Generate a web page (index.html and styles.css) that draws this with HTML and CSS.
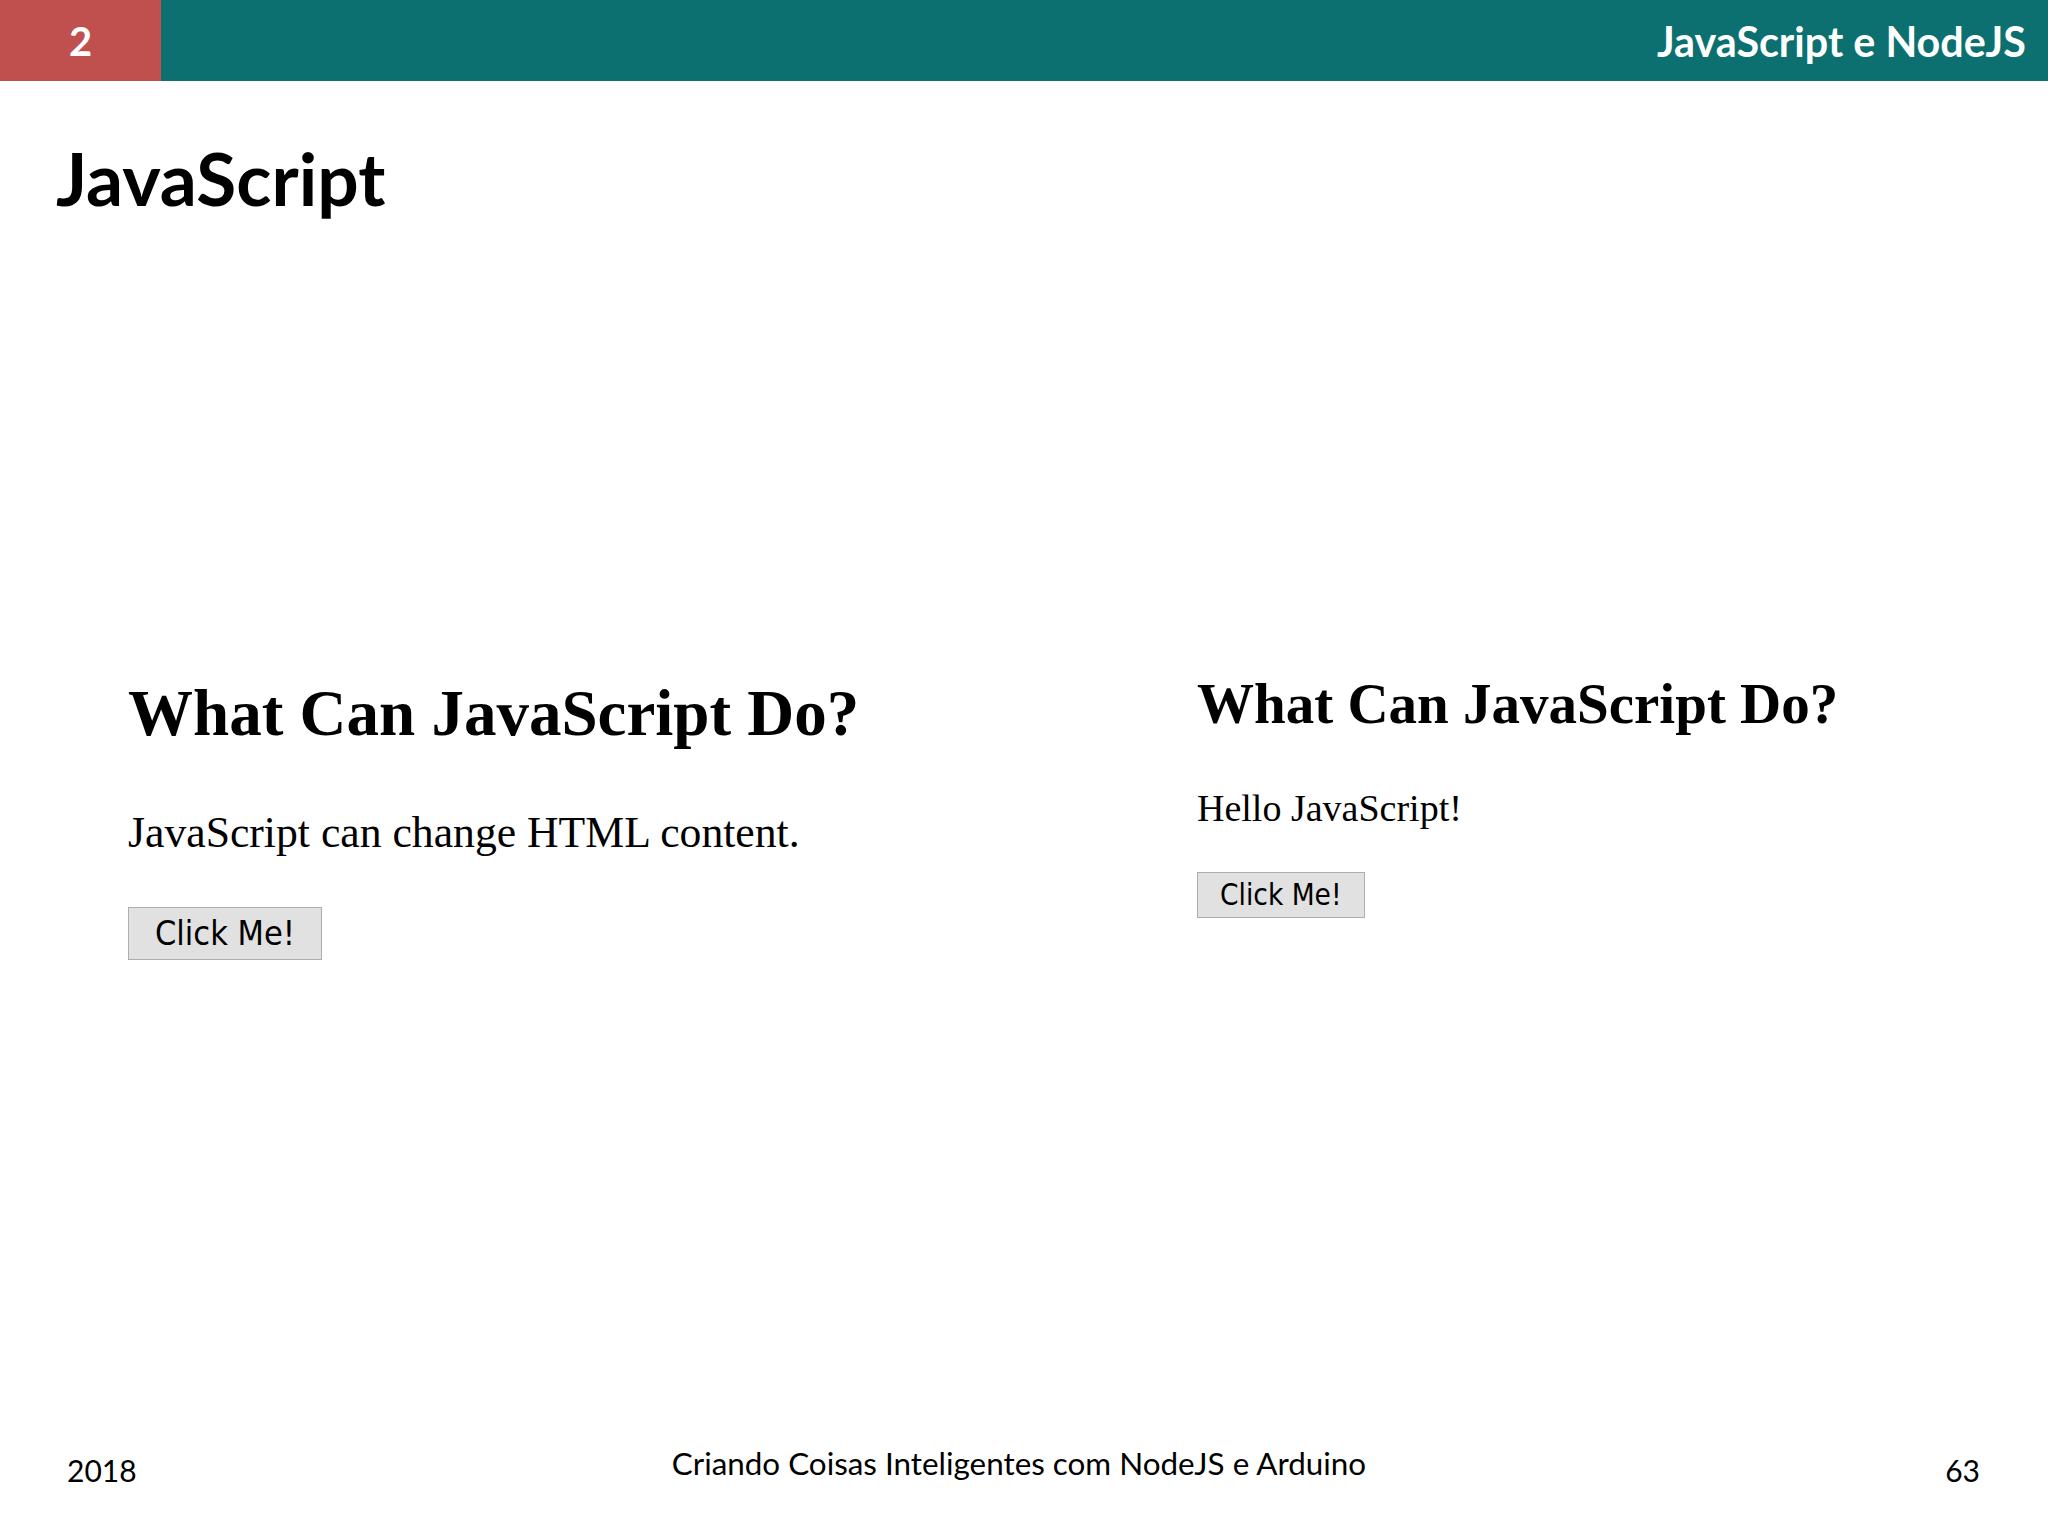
FILE: index.html
```html
<!DOCTYPE html>
<html lang="pt">
<head>
  <meta charset="UTF-8" />
  <title>JavaScript e NodeJS - 63</title>
  <link rel="stylesheet" href="styles.css">
</head>
<body>
  <div class="slide">
    <header class="topbar">
      <div class="chapter">2</div>
      <div class="bar">JavaScript e NodeJS</div>
    </header>

    <h1 class="title">JavaScript</h1>

    <section class="shots">
      <div class="shot large">
        <h2>What Can JavaScript Do?</h2>
        <p>JavaScript can change HTML content.</p>
        <button>Click Me!</button>
      </div>
      <div class="shot small">
        <h2>What Can JavaScript Do?</h2>
        <p>Hello JavaScript!</p>
        <button>Click Me!</button>
      </div>
    </section>

    <footer class="foot">
      <span class="year">2018</span>
      <span class="course">Criando Coisas Inteligentes com NodeJS e Arduino</span>
      <span class="page">63</span>
    </footer>
  </div>
</body>
</html>
```

FILE: styles.css
```css
:root {
  --red: #c0504d;
  --teal: #0c7070;
  --btn-bg: #e1e1e1;
  --btn-border: #adadad;
}
body {
  margin: 0;
  background: #fff;
  font-family: 'Lato', 'Open Sans', sans-serif;
}
.slide {
  width: 2048px;
  height: 1536px;
  display: flex;
  flex-direction: column;
  background: #fff;
  overflow: hidden;
}

/* top bar */
.topbar {
  display: flex;
  height: 81px;
}
.chapter {
  width: 161px;
  background: var(--red);
  color: #fff;
  font-weight: bold;
  font-size: 40px;
  display: flex;
  align-items: center;
  justify-content: center;
}
.bar {
  flex: 1;
  background: var(--teal);
  color: #fff;
  font-weight: bold;
  font-size: 41.3px;
  display: flex;
  align-items: center;
  justify-content: flex-end;
  padding-right: 22px;
}

.title {
  margin: 61px 0 0 56px;
  font-size: 73px;
  line-height: 1;
  font-weight: bold;
  color: #000;
}

/* pasted browser screenshots */
.shots {
  display: grid;
  grid-template-columns: 1197px 1fr;
  align-items: start;
  margin-top: 460px;
  font-family: 'Liberation Serif', 'Times New Roman', serif;
  color: #000;
}
.shot h2 {
  margin: 0;
  font-weight: bold;
  line-height: 1;
}
.shot p {
  margin: 0;
  line-height: 1;
}
.shot button {
  display: block;
  box-sizing: border-box;
  background: var(--btn-bg);
  border: 1px solid var(--btn-border);
  border-radius: 0;
  color: #000;
  font-family: 'DejaVu Sans Condensed', 'DejaVu Sans', sans-serif;
}

.large {
  padding: 6px 0 0 128px;
}
.large h2 {
  font-size: 65px;
}
.large p {
  font-size: 43.7px;
  margin-top: 65px;
}
.large button {
  margin-top: 52px;
  height: 53px;
  padding: 0 26px;
  font-size: 34px;
  line-height: 49px;
}

.small h2 {
  font-size: 57px;
}
.small p {
  font-size: 38px;
  margin-top: 57px;
}
.small button {
  margin-top: 45px;
  height: 46px;
  padding: 0 22px;
  font-size: 29.5px;
  line-height: 42px;
}

/* footer */
.foot {
  margin-top: auto;
  display: grid;
  grid-template-columns: 1fr auto 1fr;
  align-items: start;
  padding: 0 68px 51px 58px;
  font-size: 30px;
  line-height: 1;
  color: #000;
}
.course {
  font-size: 31.4px;
}
.year,
.page {
  padding-top: 7px;
}
.year {
  margin-left: 9px;
}
.page {
  text-align: right;
}
```
